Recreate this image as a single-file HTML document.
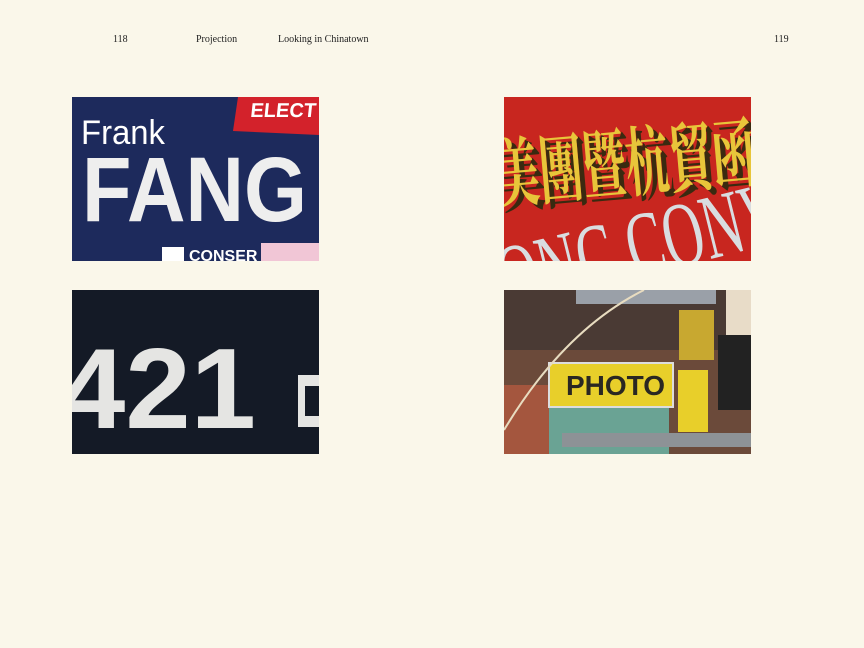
<!DOCTYPE html>
<html><head><meta charset="utf-8"><style>
body{margin:0;width:864px;height:648px;background:#faf7ea;position:relative;overflow:hidden;font-family:"Liberation Serif",serif;}
.h{position:absolute;top:34px;font-size:10px;color:#222;}
.img{position:absolute;width:247px;height:164px;overflow:hidden;}
svg{display:block}
</style></head><body>
<div class="h" style="left:113px">118</div>
<div class="h" style="left:196px">Projection</div>
<div class="h" style="left:278px">Looking in Chinatown</div>
<div class="h" style="left:774px">119</div>

<div class="img" style="left:72px;top:97px;background:#1d2a5c">
<svg width="247" height="164" font-family="Liberation Sans, sans-serif">
<polygon points="166,0 247,0 247,38 161,34" fill="#d3222b"/>
<text x="180" y="20" fill="#fff" font-size="20" font-weight="bold" transform="skewX(-6)">ELECT</text>
<text x="9" y="47" fill="#fff" font-size="34" textLength="84" lengthAdjust="spacingAndGlyphs">Frank</text>
<text x="10" y="124" fill="#eee" font-size="92" font-weight="bold" textLength="225" lengthAdjust="spacingAndGlyphs">FANG</text>
<rect x="90" y="150" width="22" height="20" fill="#fff"/>
<text x="117" y="164" fill="#fff" font-size="16" font-weight="bold">CONSER</text>
<rect x="189" y="146" width="60" height="20" fill="#f1c6d6"/>
</svg></div>

<div class="img" style="left:72px;top:290px;background:#141a26">
<svg width="247" height="164" font-family="Liberation Sans, sans-serif">
<text x="-12" y="138" fill="#e5e5e3" font-size="114" font-weight="bold" textLength="196" lengthAdjust="spacingAndGlyphs">421</text>
<rect x="226" y="85" width="21" height="52" fill="#e5e5e3"/>
<rect x="233" y="96" width="14" height="30" fill="#141a26"/>
</svg></div>

<div class="img" style="left:504px;top:97px;background:#c8261f">
<svg width="247" height="164" font-family="Liberation Serif, Noto Serif CJK SC, serif">
<g transform="rotate(-5 120 50)">
<text x="-8" y="95" fill="#3a2a10" font-size="58" font-weight="bold" font-family="Noto Serif CJK SC, serif" textLength="260" lengthAdjust="spacingAndGlyphs" transform="scale(1,1.3) translate(3,-19)">美團暨杭貿函</text>
<text x="-10" y="92" fill="#e8c53a" font-size="58" font-weight="bold" font-family="Noto Serif CJK SC, serif" textLength="260" lengthAdjust="spacingAndGlyphs" transform="scale(1,1.3) translate(0,-20)">美團暨杭貿函</text>
</g>
<text x="-14" y="182" fill="#d9dde0" font-size="92" transform="rotate(-14 120 130)" textLength="290" lengthAdjust="spacingAndGlyphs">ONC CONV</text>
</svg></div>

<div class="img" style="left:504px;top:290px;background:#6b4a3a">
<svg width="247" height="164" font-family="Liberation Sans, sans-serif">
<rect x="0" y="0" width="247" height="60" fill="#4a3a34"/>
<rect x="72" y="0" width="140" height="14" fill="#9aa0a8"/>
<rect x="0" y="95" width="45" height="69" fill="#a4563e"/>
<rect x="222" y="0" width="25" height="45" fill="#e8dcc8"/>
<rect x="214" y="45" width="33" height="75" fill="#222"/>
<rect x="45" y="105" width="120" height="59" fill="#6aa394"/>
<rect x="45" y="73" width="124" height="44" fill="#e8cf2a" stroke="#ddd" stroke-width="2"/>
<text x="62" y="105" fill="#2a2722" font-size="28" font-weight="bold">PHOTO</text>
<rect x="174" y="80" width="30" height="62" fill="#e8cf2a"/>
<rect x="175" y="20" width="35" height="50" fill="#c8a830"/>
<rect x="58" y="143" width="189" height="14" fill="#8d9296"/>
<path d="M0,140 Q60,40 140,0" stroke="#e8dcc0" stroke-width="2" fill="none"/>
</svg></div>
</body></html>
